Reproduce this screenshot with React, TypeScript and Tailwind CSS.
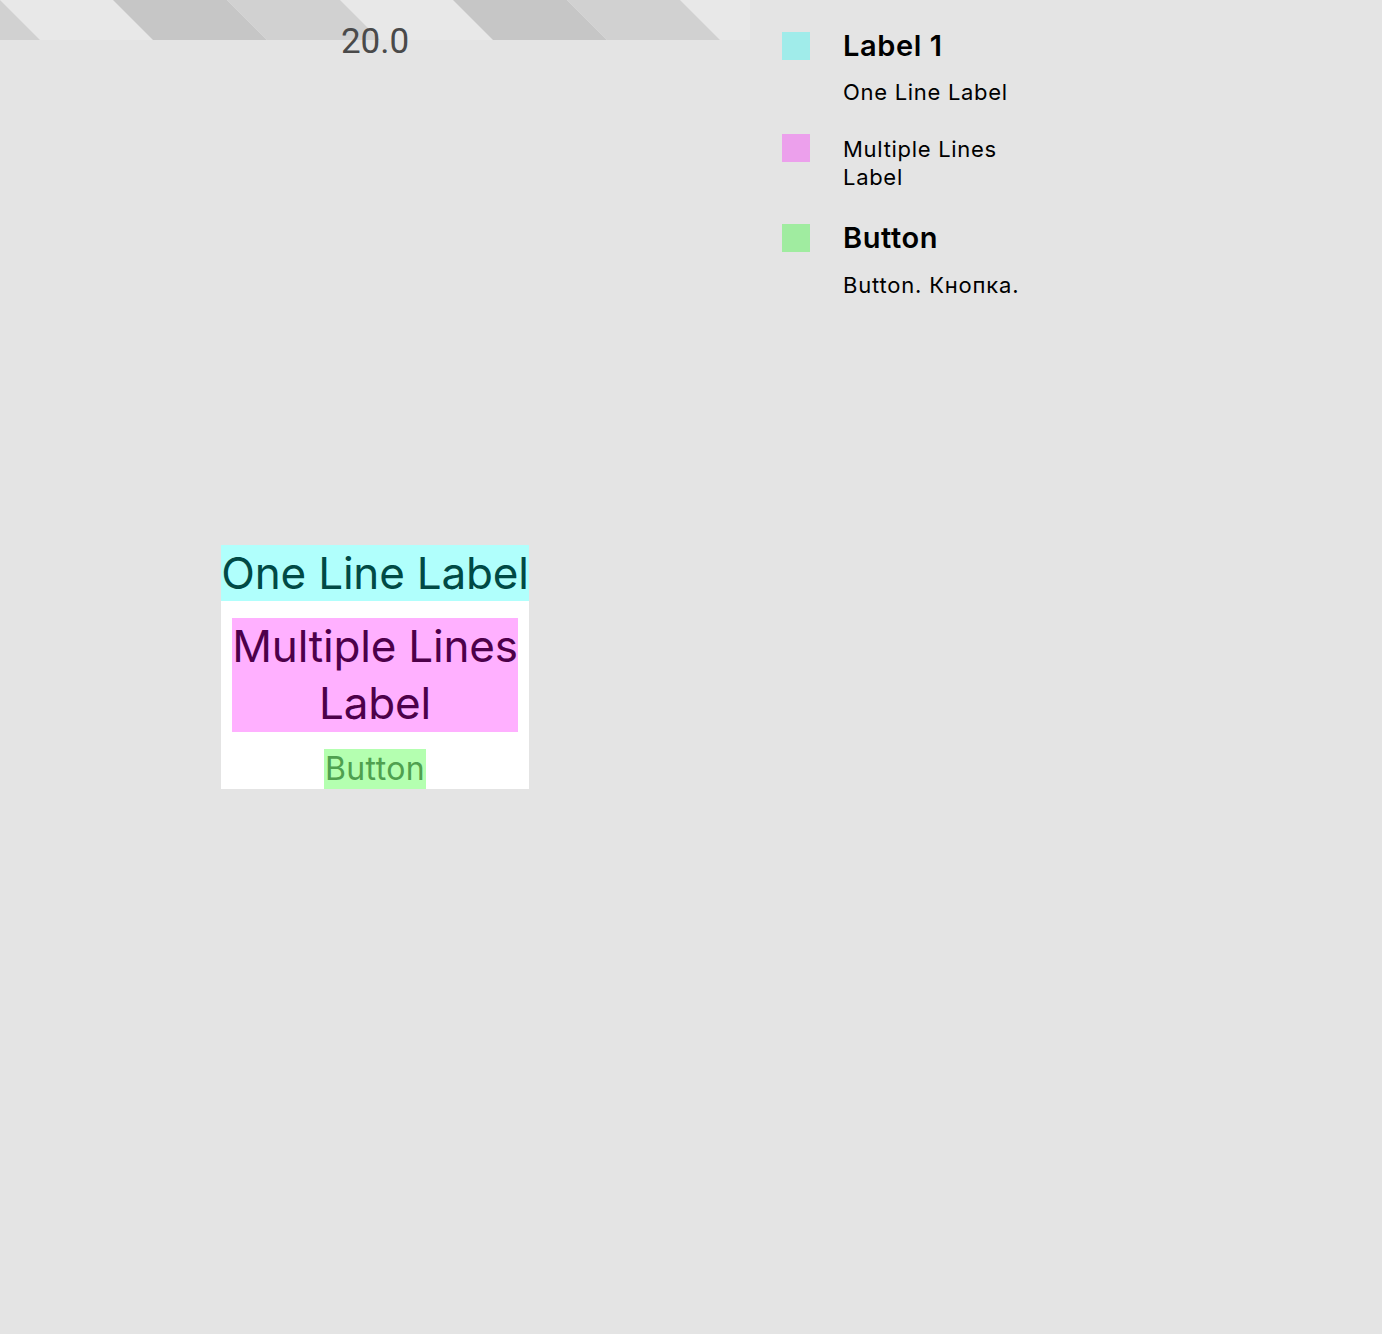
import React from 'react';

const font = { fontFamily: 'Inter, "Noto Sans", sans-serif' };

function StripeBar() {
  return (
    <div className="relative w-[750px] h-[40px] shrink-0">
      <svg width="750" height="40" className="block">
        <rect width="750" height="40" fill="#e8e8e8" />
        {[-340, 0, 340].map((x) => (
          <g key={x}>
            <polygon points={`${x + 113},0 ${x + 227},0 ${x + 267},40 ${x + 153},40`} fill="#c6c6c6" />
            <polygon points={`${x + 227},0 ${x + 340},0 ${x + 380},40 ${x + 267},40`} fill="#d1d1d1" />
          </g>
        ))}
      </svg>
      <span
        className="absolute left-0 right-0 top-[21px] text-center text-[35px] leading-[42px] text-[#4a4a4a]"
        style={{ fontFamily: 'Roboto, sans-serif' }}
      >
        20.0
      </span>
    </div>
  );
}

function Preview() {
  return (
    <div className="ml-[221px] mt-[505px] w-[308px] bg-white flex flex-col items-center" style={font}>
      <div className="w-full h-[56px] bg-[#b0fffc] text-[#004a45] text-[44px] leading-[56px] text-center whitespace-nowrap tracking-[-0.2px]">
        One Line Label
      </div>
      <div className="mt-[17px] w-[286px] h-[114px] bg-[#ffb0ff] text-[#4d004a] text-[44px] leading-[57px] text-center whitespace-nowrap tracking-[-0.2px]">
        Multiple Lines
        <br />
        Label
      </div>
      <div className="mt-[17px] w-[102px] h-[40px] bg-[#b4ffb0] text-[#4fa04f] text-[32px] leading-[40px] text-center tracking-[0.4px] whitespace-nowrap">
        Button
      </div>
    </div>
  );
}

function LegendItem({ color, children }: { color: string; children: React.ReactNode }) {
  return (
    <div className="flex gap-[33px]">
      <div className={`w-[28px] h-[28px] shrink-0 ${color}`} />
      <div>{children}</div>
    </div>
  );
}

function Legend() {
  return (
    <div className="ml-[32px] pt-[32px] flex flex-col text-black" style={font}>
      <LegendItem color="bg-[#a0ecea]">
        <div className="text-[29px] leading-[28px] font-semibold tracking-[0.6px]">Label 1</div>
        <div className="mt-[18px] text-[22px] leading-[28px] tracking-[0.7px]">One Line Label</div>
      </LegendItem>
      <div className="mt-[28px]">
        <LegendItem color="bg-[#eca0ec]">
          <div className="text-[22px] leading-[28px] mt-[1px] tracking-[0.7px]">
            Multiple Lines
            <br />
            Label
          </div>
        </LegendItem>
      </div>
      <div className="mt-[33px]">
        <LegendItem color="bg-[#a0eca0]">
          <div className="text-[29px] leading-[28px] font-semibold tracking-[0.6px]">Button</div>
          <div className="mt-[19px] text-[22px] leading-[28px] tracking-[0.8px]">Button. Кнопка.</div>
        </LegendItem>
      </div>
    </div>
  );
}

export default function App() {
  return (
    <div className="w-[1382px] h-[1334px] bg-[#e4e4e4] flex overflow-hidden">
      <div className="flex flex-col">
        <StripeBar />
        <Preview />
      </div>
      <Legend />
    </div>
  );
}
